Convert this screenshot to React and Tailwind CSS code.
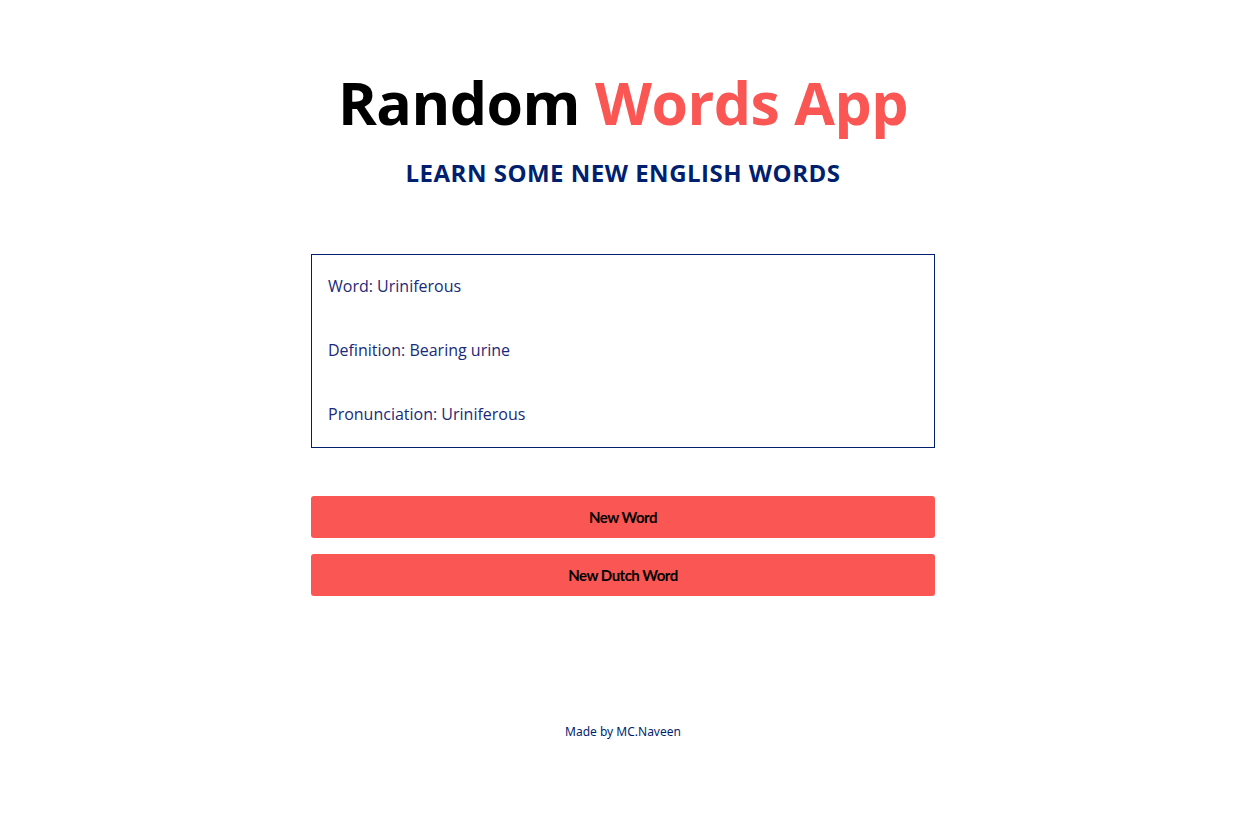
export default function App() {
  return (
    <div className="min-h-screen bg-white pl-[13px] flex flex-col items-center" style={{ fontFamily: '"Open Sans", "Liberation Sans", sans-serif' }}>
      <h1 className="mt-[62px] text-[59px] leading-[80px] font-bold text-black tracking-[-0.5px]">
        Random <span className="text-[#f95654]">Words App</span>
      </h1>
      <h2 className="mt-[16px] text-[24px] leading-[30px] font-bold text-[#001f6e] tracking-[0.5px]">
        LEARN SOME NEW ENGLISH WORDS
      </h2>
      <div className="mt-[66px] w-[624px] border border-[#001f6e] px-4 pt-[20px] pb-[22px] text-[16px] leading-[22px] text-[#1a2a78]">
        <p>Word: Uriniferous</p>
        <p className="mt-[42px]">Definition: Bearing urine</p>
        <p className="mt-[42px]">Pronunciation: Uriniferous</p>
      </div>
      <div className="mt-[48px] w-[624px] flex flex-col gap-4" style={{ fontFamily: 'Lato, "Open Sans", sans-serif' }}>
        <button className="h-[42px] w-full rounded-[3px] bg-[#f95654] text-[15px] font-bold tracking-[-0.5px] text-black">New Word</button>
        <button className="h-[42px] w-full rounded-[3px] bg-[#f95654] text-[15px] font-bold tracking-[-0.5px] text-black">New Dutch Word</button>
      </div>
      <footer className="mt-[127px] text-[12px] text-[#001f6e]" style={{ fontFamily: '"Noto Sans", sans-serif' }}>
        Made by MC.Naveen
      </footer>
    </div>
  )
}
